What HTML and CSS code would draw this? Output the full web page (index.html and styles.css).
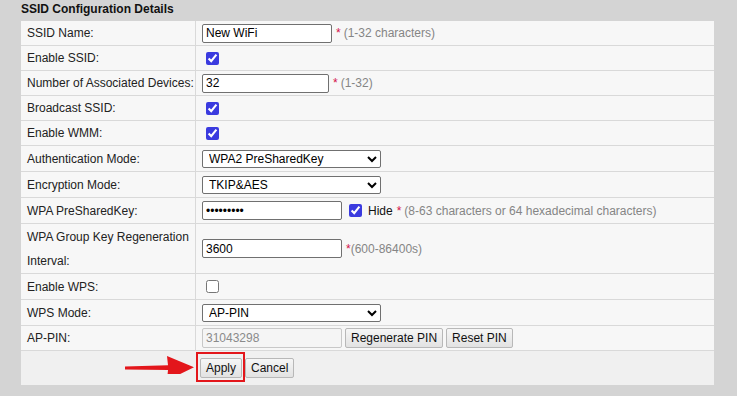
FILE: index.html
```html
<!DOCTYPE html>
<html lang="en">
<head>
<meta charset="utf-8">
<title>SSID Configuration Details</title>
<link rel="stylesheet" href="styles.css">
</head>
<body>
<div class="page">
  <div class="title">SSID Configuration Details</div>
  <div class="panel">
    <div class="row">
      <div class="label">SSID Name:</div>
      <div class="value"><input class="text w130" type="text" value="New WiFi"><span class="req sp">*</span><span class="hint sp">(1-32 characters)</span></div>
    </div>
    <div class="row">
      <div class="label">Enable SSID:</div>
      <div class="value"><input class="check" type="checkbox" checked></div>
    </div>
    <div class="row">
      <div class="label">Number of Associated Devices:</div>
      <div class="value"><input class="text w127" type="text" value="32"><span class="req sp">*</span><span class="hint sp">(1-32)</span></div>
    </div>
    <div class="row">
      <div class="label">Broadcast SSID:</div>
      <div class="value"><input class="check" type="checkbox" checked></div>
    </div>
    <div class="row">
      <div class="label">Enable WMM:</div>
      <div class="value"><input class="check" type="checkbox" checked></div>
    </div>
    <div class="row tall">
      <div class="label">Authentication Mode:</div>
      <div class="value"><select class="sel"><option>WPA2 PreSharedKey</option></select></div>
    </div>
    <div class="row tall">
      <div class="label">Encryption Mode:</div>
      <div class="value"><select class="sel"><option>TKIP&amp;AES</option></select></div>
    </div>
    <div class="row tall">
      <div class="label">WPA PreSharedKey:</div>
      <div class="value"><input class="text w140" type="password" value="123456789"><input class="check after" type="checkbox" checked><span class="plain sp">Hide</span><span class="req sp">*</span><span class="hint sp">(8-63 characters or 64 hexadecimal characters)</span></div>
    </div>
    <div class="row double">
      <div class="label two">WPA Group Key Regeneration Interval:</div>
      <div class="value"><input class="text w140" type="text" value="3600"><span class="req sp">*</span><span class="hint">(600-86400s)</span></div>
    </div>
    <div class="row tall">
      <div class="label">Enable WPS:</div>
      <div class="value"><input class="check" type="checkbox"></div>
    </div>
    <div class="row tall">
      <div class="label">WPS Mode:</div>
      <div class="value"><select class="sel"><option>AP-PIN</option></select></div>
    </div>
    <div class="row">
      <div class="label">AP-PIN:</div>
      <div class="value"><input class="text w140 pin" type="text" value="31043298" disabled><button class="btn gap-s" type="button">Regenerate PIN</button><button class="btn gap-s" type="button">Reset PIN</button></div>
    </div>
    <div class="row actions">
      <div class="spacer"></div>
      <div class="value">
        <span class="apply-wrap">
          <button class="btn" type="button">Apply</button>
          <span class="highlight"></span>
          <svg class="arrow" width="80" height="30" viewBox="0 0 80 30" aria-hidden="true"><path d="M5 22.6 L48 21.2 L47 12 L74 23.2 L47 36.5 L48 26 L5 25.4 Z" fill="#e3161b"/></svg>
        </span>
        <button class="btn gap-s" type="button">Cancel</button>
      </div>
    </div>
  </div>
</div>
</body>
</html>
```

FILE: styles.css
```css
* { box-sizing: border-box; }

html, body {
  margin: 0;
  padding: 0;
  background: #d4d4d4;
  font-family: "Liberation Sans", Arial, sans-serif;
  font-size: 12px;
  color: #222;
}

.page {
  width: 737px;
  height: 396px;
  overflow: hidden;
}

.title {
  height: 21px;
  padding: 2px 0 0 21px;
  line-height: 14px;
  font-weight: bold;
  color: #111;
}

.panel {
  margin-left: 21px;
  width: 693px;
  background: #f7f7f7;
}

.row {
  display: grid;
  grid-template-columns: 175px 1fr;
  height: 25px;
  border-bottom: 1px solid #d9d9d9;
}

.row.tall { height: 26px; }
.row.double { height: 50px; }

.label {
  display: flex;
  align-items: center;
  padding-left: 6px;
  border-right: 1px solid #d9d9d9;
  line-height: 14px;
  white-space: nowrap;
}

.label.two {
  white-space: normal;
  line-height: 24px;
  padding-right: 4px;
}

.value {
  display: flex;
  align-items: center;
  padding-left: 6px;
  white-space: nowrap;
  line-height: 14px;
}

.sp { margin-left: 3px; }

.text {
  height: 19px;
  padding: 0 3px;
  border: 1px solid #707070;
  border-radius: 2px;
  background: #fff;
  font: 12px "Liberation Sans", Arial, sans-serif;
  color: #000;
  margin: 0;
}

.w130 { width: 130px; }
.w127 { width: 127px; }
.w140 { width: 140px; }

.text.pin {
  height: 20px;
  background: #f5f5f5;
  border-color: #c8c8c8;
  color: #8a8a8a;
}

.check {
  width: 13px;
  height: 13px;
  margin: 3px 3px 3px 4px;
  accent-color: #3b3bdf;
}

.check.after { margin-left: 7px; }

.req { color: #d4124a; }
.value .req.sp { margin-left: 4px; }
.hint { color: #858585; }
.plain { color: #111; }

.sel {
  width: 179px;
  height: 18px;
  margin: 0;
  padding: 0 2px;
  border: 1px solid #707070;
  border-radius: 2px;
  background: #fff;
  font: 12px "Liberation Sans", Arial, sans-serif;
  color: #000;
}

.btn {
  height: 20px;
  margin: 0;
  padding: 0 5px;
  border: 1px solid #b8b8b8;
  border-radius: 2px;
  background: linear-gradient(#f6f6f6, #e2e2e2);
  font: 12px "Liberation Sans", Arial, sans-serif;
  color: #111;
}

.btn.gap-s { margin-left: 3px; }

.row.actions {
  height: 34px;
  border-bottom: none;
  background: #f0f0f0;
}

.row.actions .value { padding-left: 4px; }

.apply-wrap {
  position: relative;
  display: block;
  height: 20px;
}

.highlight {
  position: absolute;
  left: -4px;
  right: -3px;
  top: -6px;
  bottom: -4px;
  border: 2px solid #e3161b;
  pointer-events: none;
}

.arrow {
  position: absolute;
  left: -80px;
  top: -14px;
}
```
